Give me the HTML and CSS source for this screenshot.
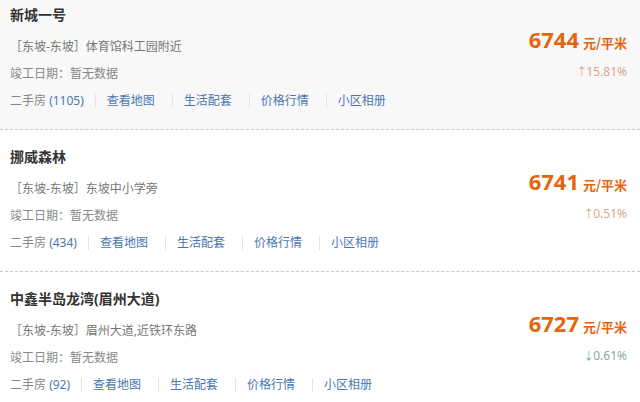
FILE: index.html
```html
<!DOCTYPE html>
<html lang="zh-CN">
<head>
    <meta charset="UTF-8">
    <meta name="viewport" content="width=device-width, initial-scale=1.0">
    <title>小区列表</title>
    <link rel="stylesheet" href="styles.css">
</head>
<body>
    <div class="list">
        <div class="item item-hover">
            <div class="info">
                <h3 class="name">新城一号</h3>
                <p class="addr">［东坡-东坡］体育馆科工园附近</p>
                <p class="date">竣工日期：暂无数据</p>
                <div class="links">
                    <span class="second">二手房 <a href="#">(1105)</a></span>
                    <a href="#" class="link">查看地图</a>
                    <a href="#" class="link">生活配套</a>
                    <a href="#" class="link">价格行情</a>
                    <a href="#" class="link">小区相册</a>
                </div>
            </div>
            <div class="price-col">
                <div class="price"><span class="num">6744</span><span class="unit">元/平米</span></div>
                <div class="rate up"><span class="arrow">↑</span>15.81%</div>
            </div>
        </div>

        <div class="item">
            <div class="info">
                <h3 class="name">挪威森林</h3>
                <p class="addr">［东坡-东坡］东坡中小学旁</p>
                <p class="date">竣工日期：暂无数据</p>
                <div class="links">
                    <span class="second">二手房 <a href="#">(434)</a></span>
                    <a href="#" class="link">查看地图</a>
                    <a href="#" class="link">生活配套</a>
                    <a href="#" class="link">价格行情</a>
                    <a href="#" class="link">小区相册</a>
                </div>
            </div>
            <div class="price-col">
                <div class="price"><span class="num">6741</span><span class="unit">元/平米</span></div>
                <div class="rate up"><span class="arrow">↑</span>0.51%</div>
            </div>
        </div>

        <div class="item">
            <div class="info">
                <h3 class="name">中鑫半岛龙湾(眉州大道)</h3>
                <p class="addr">［东坡-东坡］眉州大道,近铁环东路</p>
                <p class="date">竣工日期：暂无数据</p>
                <div class="links">
                    <span class="second">二手房 <a href="#">(92)</a></span>
                    <a href="#" class="link">查看地图</a>
                    <a href="#" class="link">生活配套</a>
                    <a href="#" class="link">价格行情</a>
                    <a href="#" class="link">小区相册</a>
                </div>
            </div>
            <div class="price-col">
                <div class="price"><span class="num">6727</span><span class="unit">元/平米</span></div>
                <div class="rate down"><span class="arrow">↓</span>0.61%</div>
            </div>
        </div>
    </div>
</body>
</html>
```
FILE: styles.css
```css
body {
    margin: 0;
    padding: 0;
    background-color: #ffffff;
    font-family: "Noto Sans", "Noto Sans CJK SC", sans-serif;
    font-size: 12px;
    color: #666;
    overflow: hidden;
}
.list {
    margin-top: -12px;
}
.item {
    display: flex;
    justify-content: space-between;
    padding: 16px 13px 17px 10px;
    border-bottom: 1px dashed #c8c8c8;
}
.item-hover {
    background-color: #f8f8f8;
}
.name {
    margin: 0;
    font-size: 14px;
    line-height: 22px;
    font-weight: bold;
    color: #333;
}
.addr,
.date {
    margin: 5px 0 0;
    line-height: 22px;
}
.addr {
    margin-top: 10px;
    color: #777;
}
.date {
    color: #888;
}
.links {
    margin-top: 5px;
    line-height: 22px;
    display: flex;
    align-items: center;
}
.links a {
    color: #4a77b3;
    text-decoration: none;
}
.second {
    color: #888;
    margin-right: 11px;
}
.link {
    border-left: 1px solid #e4e4e4;
    line-height: 14px;
    padding: 0 17px 0 11px;
}
.price-col {
    display: flex;
    flex-direction: column;
    align-items: flex-end;
    padding-top: 20px;
}
.price {
    color: #e5640e;
    font-weight: bold;
    line-height: 30px;
}
.num {
    font-size: 22px;
}
.unit {
    font-size: 13px;
    margin-left: 4px;
    font-family: "Noto Sans CJK SC", sans-serif;
}
.rate {
    margin-top: 3px;
    line-height: 20px;
    font-size: 12px;
}
.arrow {
    font-size: 11px;
    margin-right: -1px;
}
.up {
    color: #dca68c;
}
.down {
    color: #86ad92;
}
```
